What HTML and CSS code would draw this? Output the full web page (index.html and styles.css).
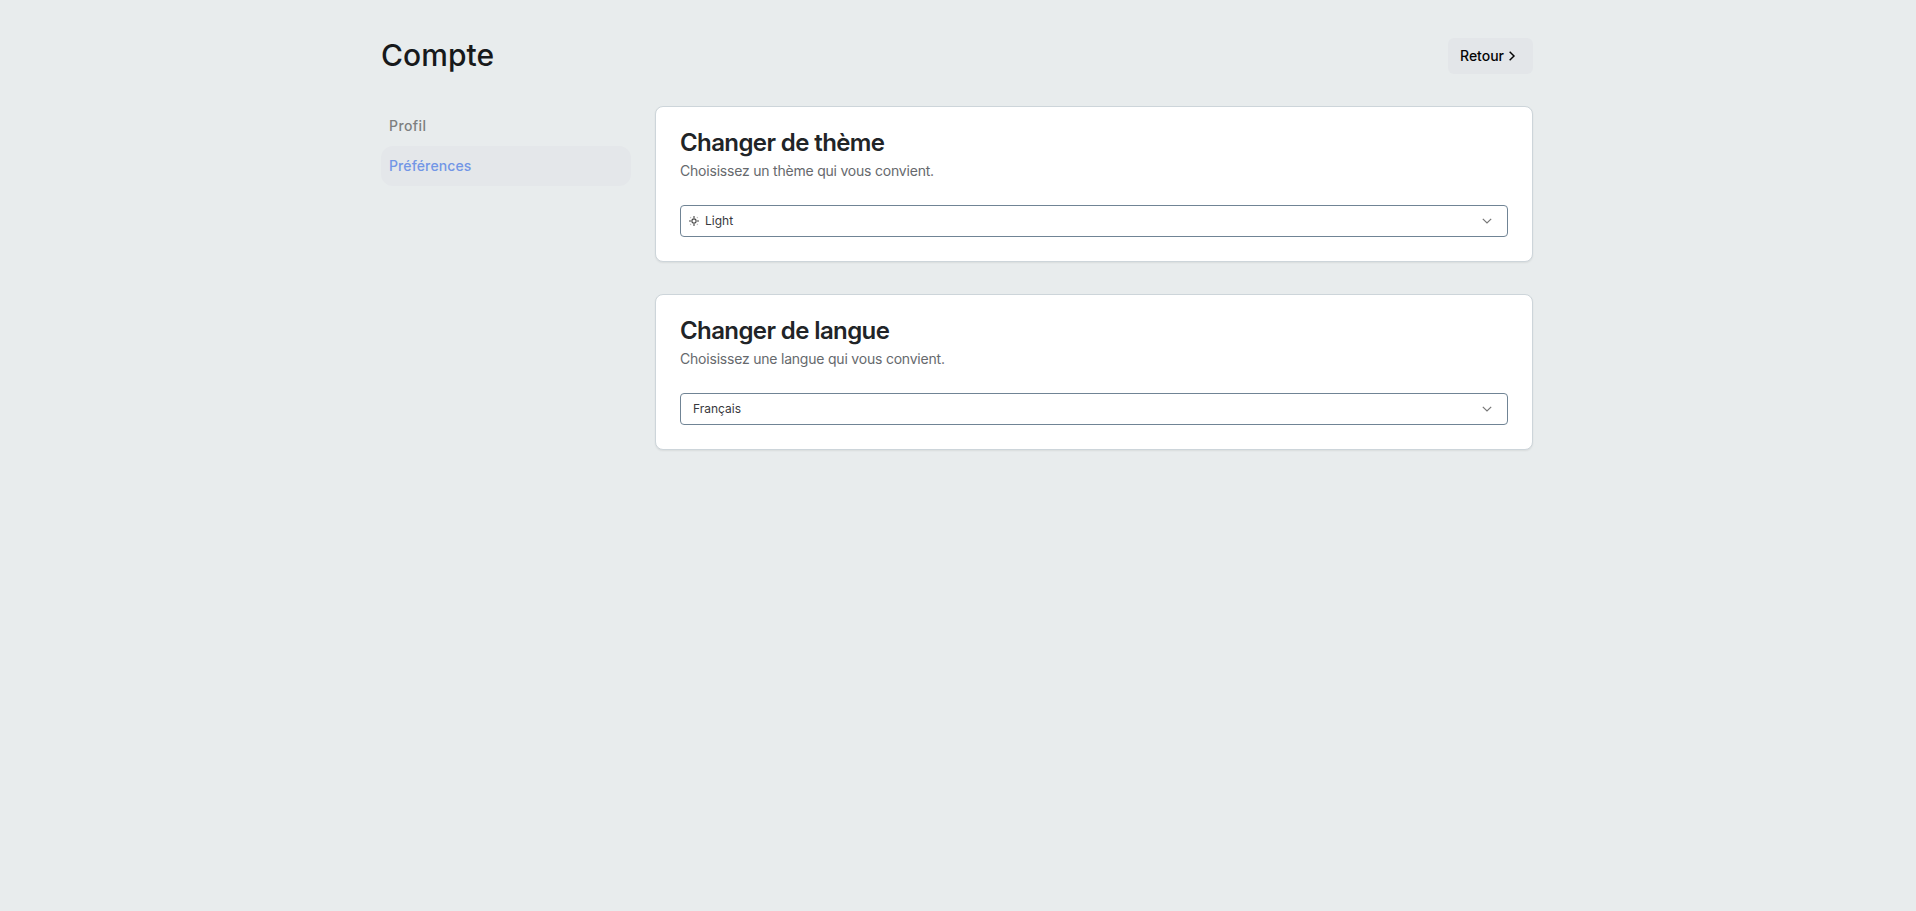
FILE: index.html
```html
<!DOCTYPE html>
<html lang="fr">
<head>
<meta charset="utf-8">
<title>Compte</title>
<link rel="stylesheet" href="styles.css">
</head>
<body>
<div class="page">
  <header class="header">
    <h1 class="page-title">Compte</h1>
    <button class="back"><span>Retour</span><svg width="16" height="16" viewBox="0 0 24 24" fill="none" stroke="currentColor" stroke-width="2.2"><path d="m8.5 5.5 6.5 6.5-6.5 6.5"/></svg></button>
  </header>
  <div class="layout">
    <nav class="nav">
      <a class="nav-item profile">Profil</a>
      <a class="nav-item active">Préférences</a>
    </nav>
    <main class="cards">
      <section class="card">
        <h2 class="card-title">Changer de thème</h2>
        <p class="card-text">Choisissez un thème qui vous convient.</p>
        <div class="select themed">
          <svg class="sun" width="12" height="12" viewBox="0 0 12 12" fill="none" stroke="#444" stroke-width="1.1"><circle cx="6" cy="6" r="2.1"/><path d="M6 1v2M6 9v2M1 6h2M9 6h2"/><path stroke="#bbb" d="m2.2 2.2.9.9M8.9 8.9l.9.9M2.2 9.8l.9-.9M8.9 3.1l.9-.9"/></svg>
          <span>Light</span>
          <svg class="chevron" width="10" height="6" viewBox="0 0 10 6" fill="none" stroke="#777" stroke-width="1.2"><path d="m.8.8 4.2 4.2L9.2.8"/></svg>
        </div>
      </section>
      <section class="card">
        <h2 class="card-title">Changer de langue</h2>
        <p class="card-text">Choisissez une langue qui vous convient.</p>
        <div class="select">
          <span>Français</span>
          <svg class="chevron" width="10" height="6" viewBox="0 0 10 6" fill="none" stroke="#777" stroke-width="1.2"><path d="m.8.8 4.2 4.2L9.2.8"/></svg>
        </div>
      </section>
    </main>
  </div>
</div>
</body>
</html>
```
FILE: styles.css
```css
* { box-sizing: border-box; }
body { margin: 0; min-height: 100vh; background: #e8eced; font-family: Inter, "Liberation Sans", sans-serif; }
h1, h2, p { margin: 0; }
.page { width: 1154px; margin: 0 auto; padding: 38px 2px 0 0; }
.header { height: 36px; display: flex; align-items: center; justify-content: space-between; }
.page-title { font-size: 30px; line-height: 36px; font-weight: 550; color: #17191b; letter-spacing: 0.05px; padding-bottom: 2px; }
.back { width: 85px; height: 36px; border: 0; border-radius: 6px; background: #e3e6e9; color: #050505; font: 450 14px/20px Inter, sans-serif; letter-spacing: 0; padding: 0 0 0 12px; display: flex; align-items: center; gap: 0; }
.layout { display: grid; grid-template-columns: 250px 878px; gap: 24px; margin-top: 32px; }
.nav-item { display: flex; align-items: center; height: 40px; padding: 0 0 2px 8px; border-radius: 12px; color: #7d7f80; font-size: 14px; font-weight: 500; letter-spacing: 0.12px; }
.nav-item.profile { letter-spacing: 0.4px; }
.nav-item.active { background: #e4e7ea; color: #7296e6; }
.cards { display: grid; gap: 32px; }
.card { height: 156px; background: #fff; border: 1px solid #cdd5da; border-radius: 8px; padding: 23px 24px; box-shadow: 0 1px 2px rgba(0, 0, 0, .07); }
.card-title { font-size: 24px; line-height: 24px; font-weight: 570; letter-spacing: -0.6px; color: #212427; padding-top: 1px; }
.card-text { font-size: 14px; line-height: 20px; letter-spacing: -0.21px; color: #66696d; margin-top: 6px; }
.select { height: 32px; border: 1px solid #708495; border-radius: 4px; margin-top: 24px; padding: 0 15px 0 12px; display: flex; align-items: center; color: #38383d; font-size: 12px; line-height: 16px; }
.themed { padding-left: 7px; gap: 5px; }
.chevron { margin-left: auto; }
```
